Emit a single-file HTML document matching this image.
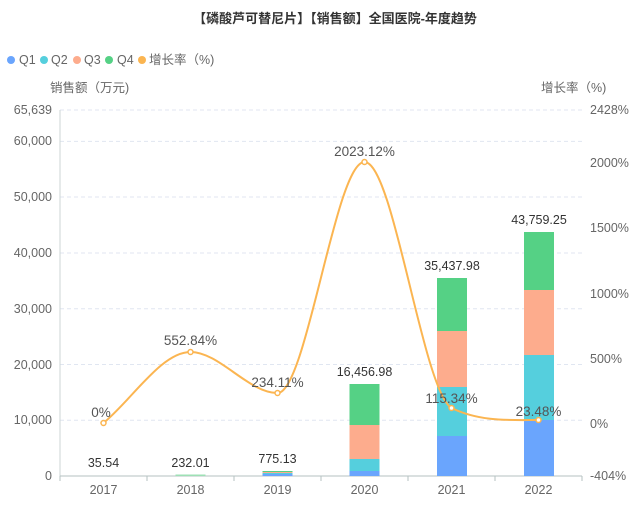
<!DOCTYPE html>
<html><head><meta charset="utf-8"><style>
body{margin:0;background:#fff;width:634px;height:503px;overflow:hidden;font-family:"Liberation Sans","Noto Sans CJK SC",sans-serif;}
</style></head><body>
<svg width="634" height="503" xmlns="http://www.w3.org/2000/svg" font-family="Liberation Sans, Noto Sans CJK SC, sans-serif">
<text x="335" y="23" text-anchor="middle" font-size="13" font-weight="bold" fill="#333">【磷酸芦可替尼片】【销售额】全国医院-年度趋势</text>
<g font-size="12.5" fill="#666">
<circle cx="11" cy="60" r="4" fill="#6aa5fd"/><text x="19" y="64">Q1</text>
<circle cx="44" cy="60" r="4" fill="#55cfdd"/><text x="51" y="64">Q2</text>
<circle cx="77" cy="60" r="4" fill="#fdac8d"/><text x="84" y="64">Q3</text>
<circle cx="109" cy="60" r="4" fill="#55d185"/><text x="117" y="64">Q4</text>
<circle cx="142" cy="60" r="4" fill="#fbb551"/><text x="149" y="64">增长率（%)</text>
<text x="50" y="92">销售额（万元)</text>
<text x="541" y="92">增长率（%)</text>
</g>
<g stroke="#e0e6f1" stroke-dasharray="4,3">
<line x1="60" y1="110" x2="582" y2="110"/><line x1="60" y1="141.4" x2="582" y2="141.4"/><line x1="60" y1="197" x2="582" y2="197"/><line x1="60" y1="253" x2="582" y2="253"/><line x1="60" y1="308.7" x2="582" y2="308.7"/><line x1="60" y1="364.5" x2="582" y2="364.5"/><line x1="60" y1="420.2" x2="582" y2="420.2"/>
</g>
<line x1="60" y1="110" x2="60" y2="476" stroke="#ccd6d6"/>
<line x1="60" y1="476" x2="582" y2="476" stroke="#b5c2c2"/>
<g stroke="#b5c2c2"><line x1="60" y1="476" x2="60" y2="481"/><line x1="147" y1="476" x2="147" y2="481"/><line x1="234" y1="476" x2="234" y2="481"/><line x1="321" y1="476" x2="321" y2="481"/><line x1="408" y1="476" x2="408" y2="481"/><line x1="495" y1="476" x2="495" y2="481"/><line x1="582" y1="476" x2="582" y2="481"/></g>
<g font-size="12.5" fill="#666" text-anchor="end">
<text x="52" y="114">65,639</text><text x="52" y="145">60,000</text><text x="52" y="201">50,000</text><text x="52" y="257">40,000</text><text x="52" y="313">30,000</text><text x="52" y="369">20,000</text><text x="52" y="424">10,000</text><text x="52" y="480">0</text>
</g>
<g font-size="12.5" fill="#666">
<text x="590" y="114">2428%</text><text x="590" y="167">2000%</text><text x="590" y="232">1500%</text><text x="590" y="298">1000%</text><text x="590" y="363">500%</text><text x="590" y="428">0%</text><text x="590" y="480">-404%</text>
</g>
<g font-size="12.5" fill="#666" text-anchor="middle">
<text x="103.5" y="494">2017</text><text x="190.5" y="494">2018</text><text x="277.5" y="494">2019</text><text x="364.5" y="494">2020</text><text x="451.5" y="494">2021</text><text x="538.5" y="494">2022</text>
</g>
<rect x="262.5" y="474" width="30" height="2" fill="#6aa5fd"/><rect x="262.5" y="473" width="30" height="1" fill="#55cfdd"/><rect x="262.5" y="472" width="30" height="1" fill="#fdac8d"/><rect x="262.5" y="471" width="30" height="1" fill="#55d185"/>
<rect x="175.5" y="474.5" width="30" height="1.5" fill="#9ee0b5"/>
<rect x="349.5" y="471" width="30" height="5" fill="#6aa5fd"/><rect x="349.5" y="459" width="30" height="12" fill="#55cfdd"/><rect x="349.5" y="425" width="30" height="34" fill="#fdac8d"/><rect x="349.5" y="384" width="30" height="41" fill="#55d185"/>
<rect x="437" y="436" width="30" height="40" fill="#6aa5fd"/><rect x="437" y="387" width="30" height="49" fill="#55cfdd"/><rect x="437" y="331" width="30" height="56" fill="#fdac8d"/><rect x="437" y="278" width="30" height="53" fill="#55d185"/>
<rect x="524" y="420" width="30" height="56" fill="#6aa5fd"/><rect x="524" y="355" width="30" height="65" fill="#55cfdd"/><rect x="524" y="290" width="30" height="65" fill="#fdac8d"/><rect x="524" y="232" width="30" height="58" fill="#55d185"/>
<g font-size="12.5" fill="#333" text-anchor="middle">
<text x="103.5" y="467">35.54</text><text x="190.5" y="467">232.01</text><text x="277.5" y="463">775.13</text><text x="364.5" y="376">16,456.98</text><text x="452" y="270">35,437.98</text><text x="539" y="224">43,759.25</text>
</g>
<path d="M103.5,423 C132.5,399 161.5,352 190.5,352 C219.5,352 248.5,393 277.5,393 C306.5,393 335.5,162 364.5,162 C393.5,162 422.5,390 451.5,408 C480.5,422 509.5,420 538.5,420" fill="none" stroke="#fbb551" stroke-width="2"/>
<g fill="#fff" stroke="#fbb551" stroke-width="1.5">
<circle cx="103.5" cy="423" r="2.5"/><circle cx="190.5" cy="352" r="2.5"/><circle cx="277.5" cy="393" r="2.5"/><circle cx="364.5" cy="162" r="2.5"/><circle cx="451.5" cy="408" r="2.5"/><circle cx="538.5" cy="420" r="2.5"/>
</g>
<g font-size="13.5" fill="#555" text-anchor="middle">
<text x="101" y="417">0%</text><text x="190.5" y="345">552.84%</text><text x="277.5" y="387">234.11%</text><text x="364.5" y="156">2023.12%</text><text x="451.5" y="403">115.34%</text><text x="538.5" y="416">23.48%</text>
</g>
</svg>
</body></html>
